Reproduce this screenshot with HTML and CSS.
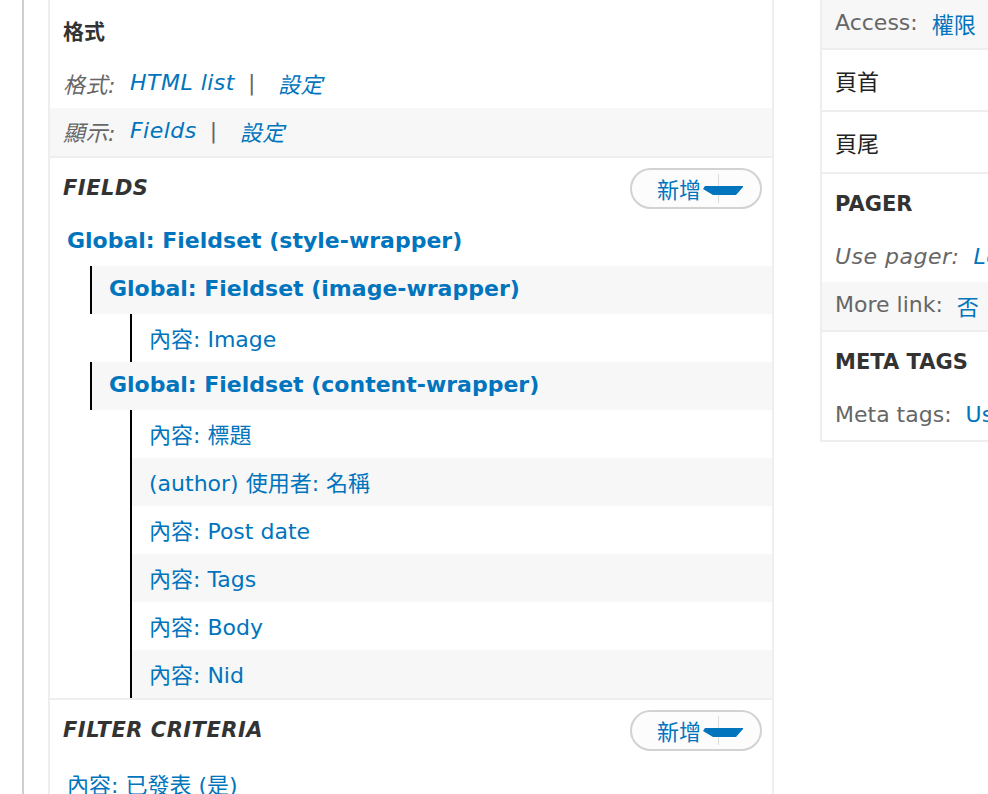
FILE: index.html
```html
<!DOCTYPE html>
<html lang="zh-Hant">
<head>
    <meta charset="UTF-8">
    <meta name="viewport" content="width=device-width, initial-scale=1.0">
    <title>Views - 編輯顯示</title>
    <link rel="stylesheet" href="styles.css">
</head>
<body>
    <div class="page">
        <div class="main">
            <div id="left-column" class="column">
                <div class="bucket">
                    <div class="bucket-title">格式</div>
                    <div class="row odd">
                        <span class="label">格式:</span>
                        <a class="link">HTML list</a>
                        <span class="sep">|</span>
                        <a class="link">設定</a>
                    </div>
                    <div class="row even">
                        <span class="label">顯示:</span>
                        <a class="link">Fields</a>
                        <span class="sep">|</span>
                        <a class="link">設定</a>
                    </div>
                </div>
                <div class="bucket">
                    <div class="bucket-title caps">
                        <span>FIELDS</span>
                        <button class="add-button">
                            <span class="add-label">新增</span>
                            <svg width="54" height="37" viewBox="0 0 54 37">
                                <line x1="15.5" y1="4" x2="15.5" y2="33" stroke="#dcdcdc" stroke-width="1" />
                                <polygon points="0,19 2,16 40,16 40,17 33,25 10,25" fill="#0074bd" />
                            </svg>
                        </button>
                    </div>
                    <div class="field depth-0 odd"><a class="link strong">Global: Fieldset (style-wrapper)</a></div>
                    <div class="field depth-1 even"><a class="link strong">Global: Fieldset (image-wrapper)</a></div>
                    <div class="field depth-2 odd"><a class="link">內容: Image</a></div>
                    <div class="field depth-1 even"><a class="link strong">Global: Fieldset (content-wrapper)</a></div>
                    <div class="field depth-2 odd"><a class="link">內容: 標題</a></div>
                    <div class="field depth-2 even"><a class="link">(author) 使用者: 名稱</a></div>
                    <div class="field depth-2 odd"><a class="link">內容: Post date</a></div>
                    <div class="field depth-2 even"><a class="link">內容: Tags</a></div>
                    <div class="field depth-2 odd"><a class="link">內容: Body</a></div>
                    <div class="field depth-2 even"><a class="link">內容: Nid</a></div>
                </div>
                <div class="bucket">
                    <div class="bucket-title caps">
                        <span>FILTER CRITERIA</span>
                        <button class="add-button">
                            <span class="add-label">新增</span>
                            <svg width="54" height="37" viewBox="0 0 54 37">
                                <line x1="15.5" y1="4" x2="15.5" y2="33" stroke="#dcdcdc" stroke-width="1" />
                                <polygon points="0,19 2,16 40,16 40,17 33,25 10,25" fill="#0074bd" />
                            </svg>
                        </button>
                    </div>
                    <div class="field depth-0 odd"><a class="link">內容: 已發表 (是)</a></div>
                    <div class="field depth-0 even"><a class="link">內容: 類型 (= Article)</a></div>
                </div>
            </div>
            <div id="right-column" class="column">
                <div class="bucket">
                    <div class="row even plain">
                        <span class="label">Access:</span>
                        <a class="link">權限</a>
                    </div>
                </div>
                <div class="bucket">
                    <div class="bucket-title light">頁首</div>
                </div>
                <div class="bucket">
                    <div class="bucket-title light">頁尾</div>
                </div>
                <div class="bucket">
                    <div class="bucket-title">PAGER</div>
                    <div class="row odd">
                        <span class="label">Use pager:</span>
                        <a class="link">Load more pager</a>
                    </div>
                    <div class="row even plain">
                        <span class="label">More link:</span>
                        <a class="link">否</a>
                    </div>
                </div>
                <div class="bucket last">
                    <div class="bucket-title">META TAGS</div>
                    <div class="row odd plain">
                        <span class="label">Meta tags:</span>
                        <a class="link">Using defaults</a>
                    </div>
                </div>
            </div>
        </div>
    </div>
</body>
</html>
```

FILE: styles.css
```css
html, body {
    margin: 0;
    height: 100%;
    overflow: hidden;
}

body {
    font-family: "DejaVu Sans", "Noto Sans CJK TC", sans-serif;
    font-size: 22px;
    color: #333;
    background-color: #fff;
}

.page {
    height: 100%;
    padding-left: 22px;
}

.main {
    display: flex;
    align-items: flex-start;
    gap: 46px;
    height: 100%;
    padding-left: 24px;
    border-left: 2px solid #cfcfcf;
}

.column {
    flex: none;
    box-sizing: border-box;
}

#left-column {
    width: 726px;
    border-left: 2px solid #eee;
    border-right: 2px solid #eee;
}

#right-column {
    width: 380px;
    border-left: 2px solid #eee;
    border-bottom: 2px solid #eee;
}

.bucket {
    border-bottom: 2px solid #eee;
}

.bucket.last {
    border-bottom: none;
}

.bucket-title {
    height: 60px;
    display: flex;
    align-items: center;
    justify-content: space-between;
    padding: 0 10px 0 13px;
    font-size: 21px;
    font-weight: bold;
    color: #333;
    white-space: nowrap;
}

.bucket-title.caps {
    font-style: italic;
    letter-spacing: 0.5px;
}

.bucket-title.light {
    font-size: 22px;
    font-weight: normal;
    color: #222;
}

.row {
    box-sizing: border-box;
    height: 48px;
    display: flex;
    align-items: center;
    padding: 0 0 3px 13px;
    font-style: italic;
    letter-spacing: 0.5px;
    white-space: nowrap;
}

.row.plain {
    font-style: normal;
    letter-spacing: 0;
}

.odd {
    background-color: #fff;
}

.even {
    background-color: #f7f7f7;
}

.label {
    color: #666;
    margin-right: 14px;
}

.link {
    color: #0074bd;
    text-decoration: none;
    cursor: pointer;
}

.strong {
    font-weight: bold;
}

.sep {
    color: #666;
    margin: 0 22px 0 13px;
    font-style: normal;
}

.field {
    box-sizing: border-box;
    height: 48px;
    display: flex;
    align-items: center;
    padding: 0 0 3px 17px;
    white-space: nowrap;
}

.depth-1 {
    margin-left: 40px;
    border-left: 2px solid #000;
}

.depth-2 {
    margin-left: 80px;
    border-left: 2px solid #000;
}

.add-button {
    display: flex;
    align-items: center;
    flex: none;
    box-sizing: border-box;
    width: 132px;
    height: 41px;
    padding: 0 0 0 25px;
    border: 2px solid #d2d2d2;
    border-radius: 21px;
    background-color: #fcfcfc;
    font-family: inherit;
    font-size: 22px;
    font-style: normal;
    font-weight: normal;
    letter-spacing: 0;
    color: #0074bd;
    cursor: pointer;
}

.add-label {
    margin-right: 2px;
}
```
